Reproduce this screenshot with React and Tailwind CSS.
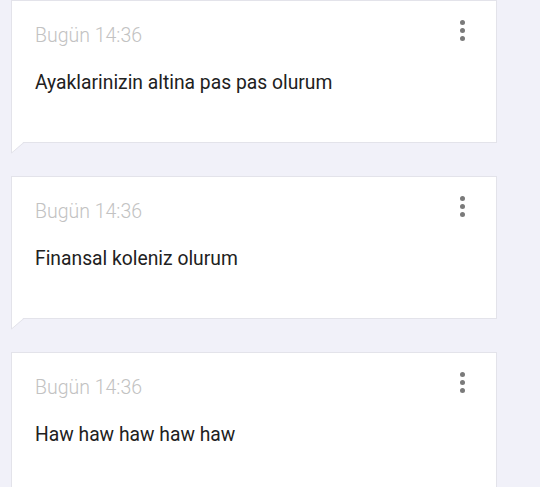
const messages = [
  { id: 1, time: 'Bugün 14:36', text: 'Ayaklarinizin altina pas pas olurum' },
  { id: 2, time: 'Bugün 14:36', text: 'Finansal koleniz olurum' },
  { id: 3, time: 'Bugün 14:36', text: 'Haw haw haw haw haw' },
];

const MoreDots = () => (
  <button type="button" className="absolute right-[31px] top-[19px] flex flex-col items-center gap-[3px] p-0">
    <span className="block h-[5px] w-[5px] rounded-full bg-[#7a7a7a]" />
    <span className="block h-[5px] w-[5px] rounded-full bg-[#7a7a7a]" />
    <span className="block h-[5px] w-[5px] rounded-full bg-[#7a7a7a]" />
  </button>
);

const Bubble = ({ time, text }) => (
  <div className="relative h-[143px] w-[486px] border border-[#e3e3ea] bg-white">
    <div className="pl-[23px] pt-[23px]">
      <div className="text-[19.5px] leading-[24px] font-light text-[#c2c2c2]">{time}</div>
      <div className="mt-[23px] text-[19.3px] leading-[24px] text-[#212121]">{text}</div>
    </div>
    <MoreDots />
    {/* little tail under the bottom-left corner */}
    <svg
      className="absolute left-[-1px] top-full"
      width="15"
      height="12"
      viewBox="0 0 15 12"
    >
      <polygon points="0.5,-1 0.5,11 13.5,-1" fill="#ffffff" />
      <polyline points="0.5,-1 0.5,11 13.5,0" fill="none" stroke="#e3e3ea" strokeWidth="1" />
    </svg>
  </div>
);

export default function App() {
  return (
    <div
      className="min-h-screen w-full overflow-hidden bg-[#f1f1f9] pl-[11px]"
      style={{ fontFamily: 'Roboto, "Noto Sans", sans-serif' }}
    >
      <div className="flex flex-col gap-[33px]">
        {messages.map((m) => (
          <Bubble key={m.id} time={m.time} text={m.text} />
        ))}
      </div>
    </div>
  );
}
